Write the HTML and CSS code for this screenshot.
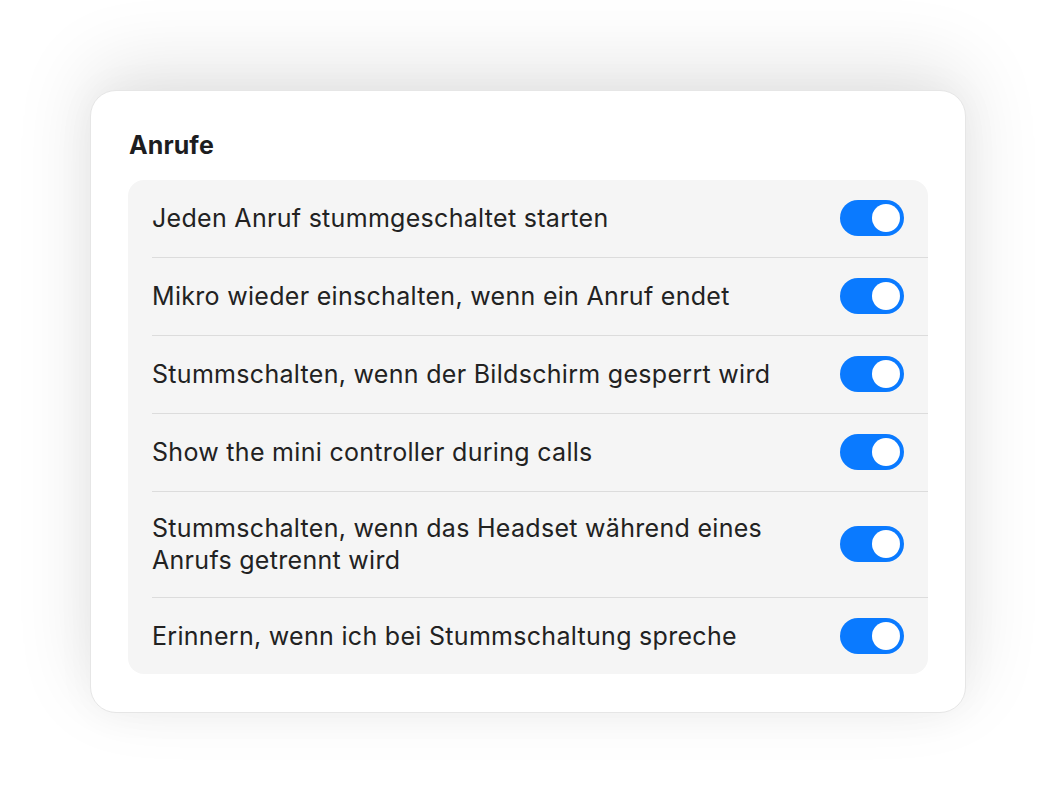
FILE: index.html
```html
<!DOCTYPE html>
<html lang="de">
<head>
<meta charset="utf-8">
<link rel="stylesheet" href="styles.css">
</head>
<body>
<div class="stage">
  <section class="card">
    <h2 class="title">Anrufe</h2>
    <div class="group">
      <div class="row"><span class="label">Jeden Anruf stummgeschaltet starten</span><span class="toggle on"><span class="knob"></span></span></div>
      <div class="row"><span class="label">Mikro wieder einschalten, wenn ein Anruf endet</span><span class="toggle on"><span class="knob"></span></span></div>
      <div class="row"><span class="label">Stummschalten, wenn der Bildschirm gesperrt wird</span><span class="toggle on"><span class="knob"></span></span></div>
      <div class="row"><span class="label">Show the mini controller during calls</span><span class="toggle on"><span class="knob"></span></span></div>
      <div class="row"><span class="label">Stummschalten, wenn das Headset während eines<br>Anrufs getrennt wird</span><span class="toggle on"><span class="knob"></span></span></div>
      <div class="row"><span class="label">Erinnern, wenn ich bei Stummschaltung spreche</span><span class="toggle on"><span class="knob"></span></span></div>
    </div>
  </section>
</div>
</body>
</html>
```

FILE: styles.css
```css
html, body {
  margin: 0;
  padding: 0;
  background: #ffffff;
}
body {
  width: 1056px;
  height: 802px;
  overflow: hidden;
  font-family: Inter, "Noto Sans", sans-serif;
  color: #1d1d1f;
}
.stage {
  padding: 90px 90px 0 90px;
}
.card {
  width: 800px;
  background: #ffffff;
  border: 1px solid #e6e6e6;
  border-radius: 26px;
  padding: 37px 37px 38px 37px;
  box-shadow: 0 -22px 80px rgba(0, 0, 0, 0.11), 0 0 40px rgba(0, 0, 0, 0.04);
}
.title {
  margin: 0 0 18px 1px;
  font-size: 25px;
  line-height: 34px;
  font-weight: 700;
  letter-spacing: 0.1px;
  color: #1d1d1f;
}
.group {
  background: #f5f5f5;
  border-radius: 16px;
  padding-left: 24px;
}
.row {
  display: flex;
  align-items: center;
  justify-content: space-between;
  padding: 20px 24px 21px 0;
  border-bottom: 1px solid #dcdcdc;
}
.row:last-child {
  border-bottom: none;
  padding-bottom: 20px;
}
.label {
  font-size: 25px;
  line-height: 32px;
  font-weight: 400;
  letter-spacing: 0.3px;
  color: #222222;
}
.toggle {
  flex: none;
  width: 64px;
  height: 36px;
  border-radius: 18px;
  background: #0a7aff;
  display: flex;
  align-items: center;
  justify-content: flex-end;
  padding: 0 4px;
  box-sizing: border-box;
}
.knob {
  width: 28px;
  height: 28px;
  border-radius: 50%;
  background: #ffffff;
}
```
